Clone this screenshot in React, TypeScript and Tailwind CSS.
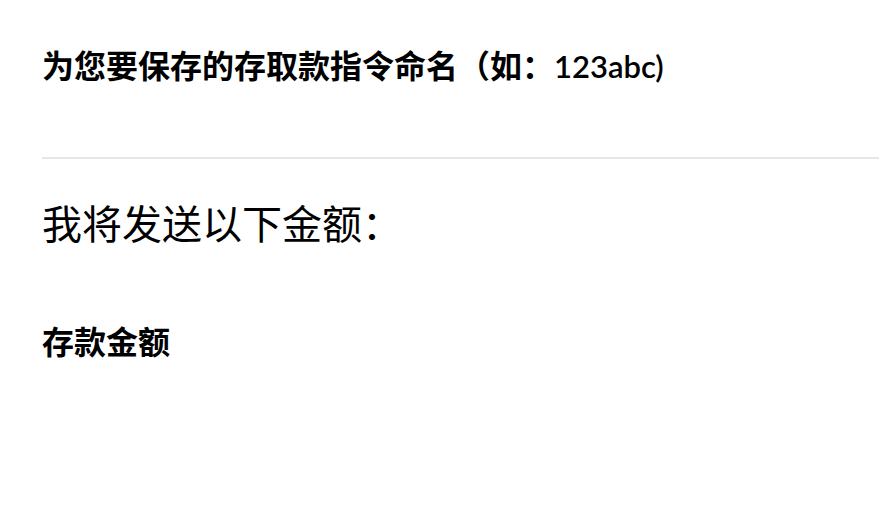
const font = { fontFamily: '"Lato", "Noto Sans CJK SC", sans-serif' };

export default function App() {
  return (
    <div className="min-h-[513px] w-full bg-white text-black" style={font}>
      <div className="pl-[42px]">
        <h2 className="pt-[46px] text-[32px] font-bold leading-[40px]">
          为您要保存的存取款指令命名（如：
          <span className="text-[31px] font-semibold">123abc)</span>
        </h2>
        <div className="mt-[71px] h-[2px] bg-[#e6e6e6]" />
        <h1 className="mt-[40px] text-[40px] font-normal leading-[50px]">
          我将发送以下金额：
        </h1>
        <h3 className="mt-[73px] text-[32px] font-bold leading-[40px]">
          存款金额
        </h3>
      </div>
    </div>
  );
}
